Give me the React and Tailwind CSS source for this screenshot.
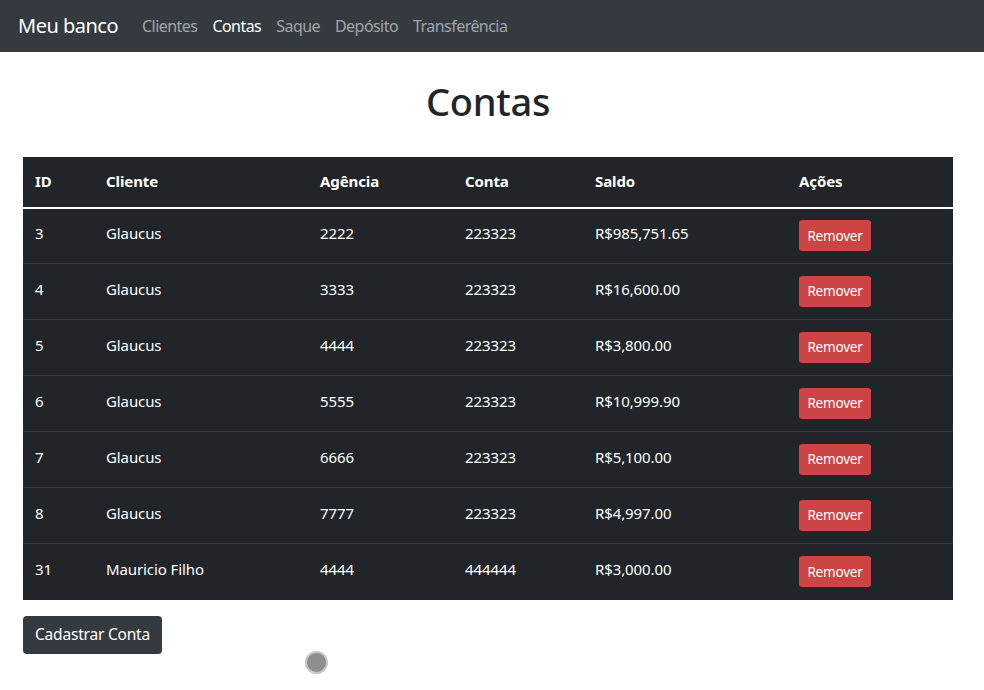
import React from "react";

const rows = [
  ["3", "Glaucus", "2222", "223323", "R$985,751.65"],
  ["4", "Glaucus", "3333", "223323", "R$16,600.00"],
  ["5", "Glaucus", "4444", "223323", "R$3,800.00"],
  ["6", "Glaucus", "5555", "223323", "R$10,999.90"],
  ["7", "Glaucus", "6666", "223323", "R$5,100.00"],
  ["8", "Glaucus", "7777", "223323", "R$4,997.00"],
  ["31", "Mauricio Filho", "4444", "444444", "R$3,000.00"],
];

export default function App() {
  return (
    <div className="relative min-h-[690px] bg-white text-[#212529]" style={{ fontFamily: '"Noto Sans", "Open Sans", sans-serif' }}>
      <nav className="h-[52px] bg-[#343a40] flex items-center px-[18px]">
        <span className="text-white text-[20px] mr-[24px] tracking-[-0.5px]">Meu banco</span>
        <div className="flex gap-[15px] text-[16px] tracking-[-0.55px]">
          <span className="text-[#a3a6a9]">Clientes</span>
          <span className="text-white">Contas</span>
          <span className="text-[#a3a6a9]">Saque</span>
          <span className="text-[#a3a6a9]">Depósito</span>
          <span className="text-[#a3a6a9]">Transferência</span>
        </div>
      </nav>
      <div className="px-[23px] pr-[31px]">
        <h1 className="text-center text-[38px] font-medium leading-[1.2] mt-[27px] mb-[32px] tracking-[-0.3px]">Contas</h1>
        <table className="w-[930px] bg-[#212529] text-white text-[15px] border-collapse table-fixed tracking-[-0.1px]">
          <colgroup>
            <col className="w-[71px]" />
            <col className="w-[214px]" />
            <col className="w-[145px]" />
            <col className="w-[130px]" />
            <col className="w-[204px]" />
            <col className="w-[166px]" />
          </colgroup>
          <thead>
            <tr className="h-[51px] border-b-2 border-white text-left">
              <th className="pl-[12px] font-bold">ID</th>
              <th className="pl-[12px] font-bold">Cliente</th>
              <th className="pl-[12px] font-bold">Agência</th>
              <th className="pl-[12px] font-bold">Conta</th>
              <th className="pl-[12px] font-bold">Saldo</th>
              <th className="pl-[12px] font-bold">Ações</th>
            </tr>
          </thead>
          <tbody>
            {rows.map((r, i) => (
              <tr key={i} className={"h-[56px] " + (i < rows.length - 1 ? "border-b border-[#373b3e]" : "")}>
                <td className="pl-[12px] pb-[5px]">{r[0]}</td>
                <td className="pl-[12px] pb-[5px]">{r[1]}</td>
                <td className="pl-[12px] pb-[5px]">{r[2]}</td>
                <td className="pl-[12px] pb-[5px]">{r[3]}</td>
                <td className="pl-[12px] pb-[5px]">{r[4]}</td>
                <td className="pl-[12px]">
                  <button className="h-[31px] w-[72px] bg-[#cc4444] rounded-[3px] text-[13.5px] text-white tracking-[-0.2px]">Remover</button>
                </td>
              </tr>
            ))}
          </tbody>
        </table>
        <button className="mt-[16px] h-[38px] w-[139px] bg-[#343a40] text-white text-[15.5px] rounded-[4px] tracking-[-0.2px]">Cadastrar Conta</button>
      </div>
      <div className="absolute left-[305px] top-[651px] w-[23px] h-[23px] rounded-full bg-[#8e8e8e] border-2 border-[#c6c4d4]"></div>
    </div>
  );
}
